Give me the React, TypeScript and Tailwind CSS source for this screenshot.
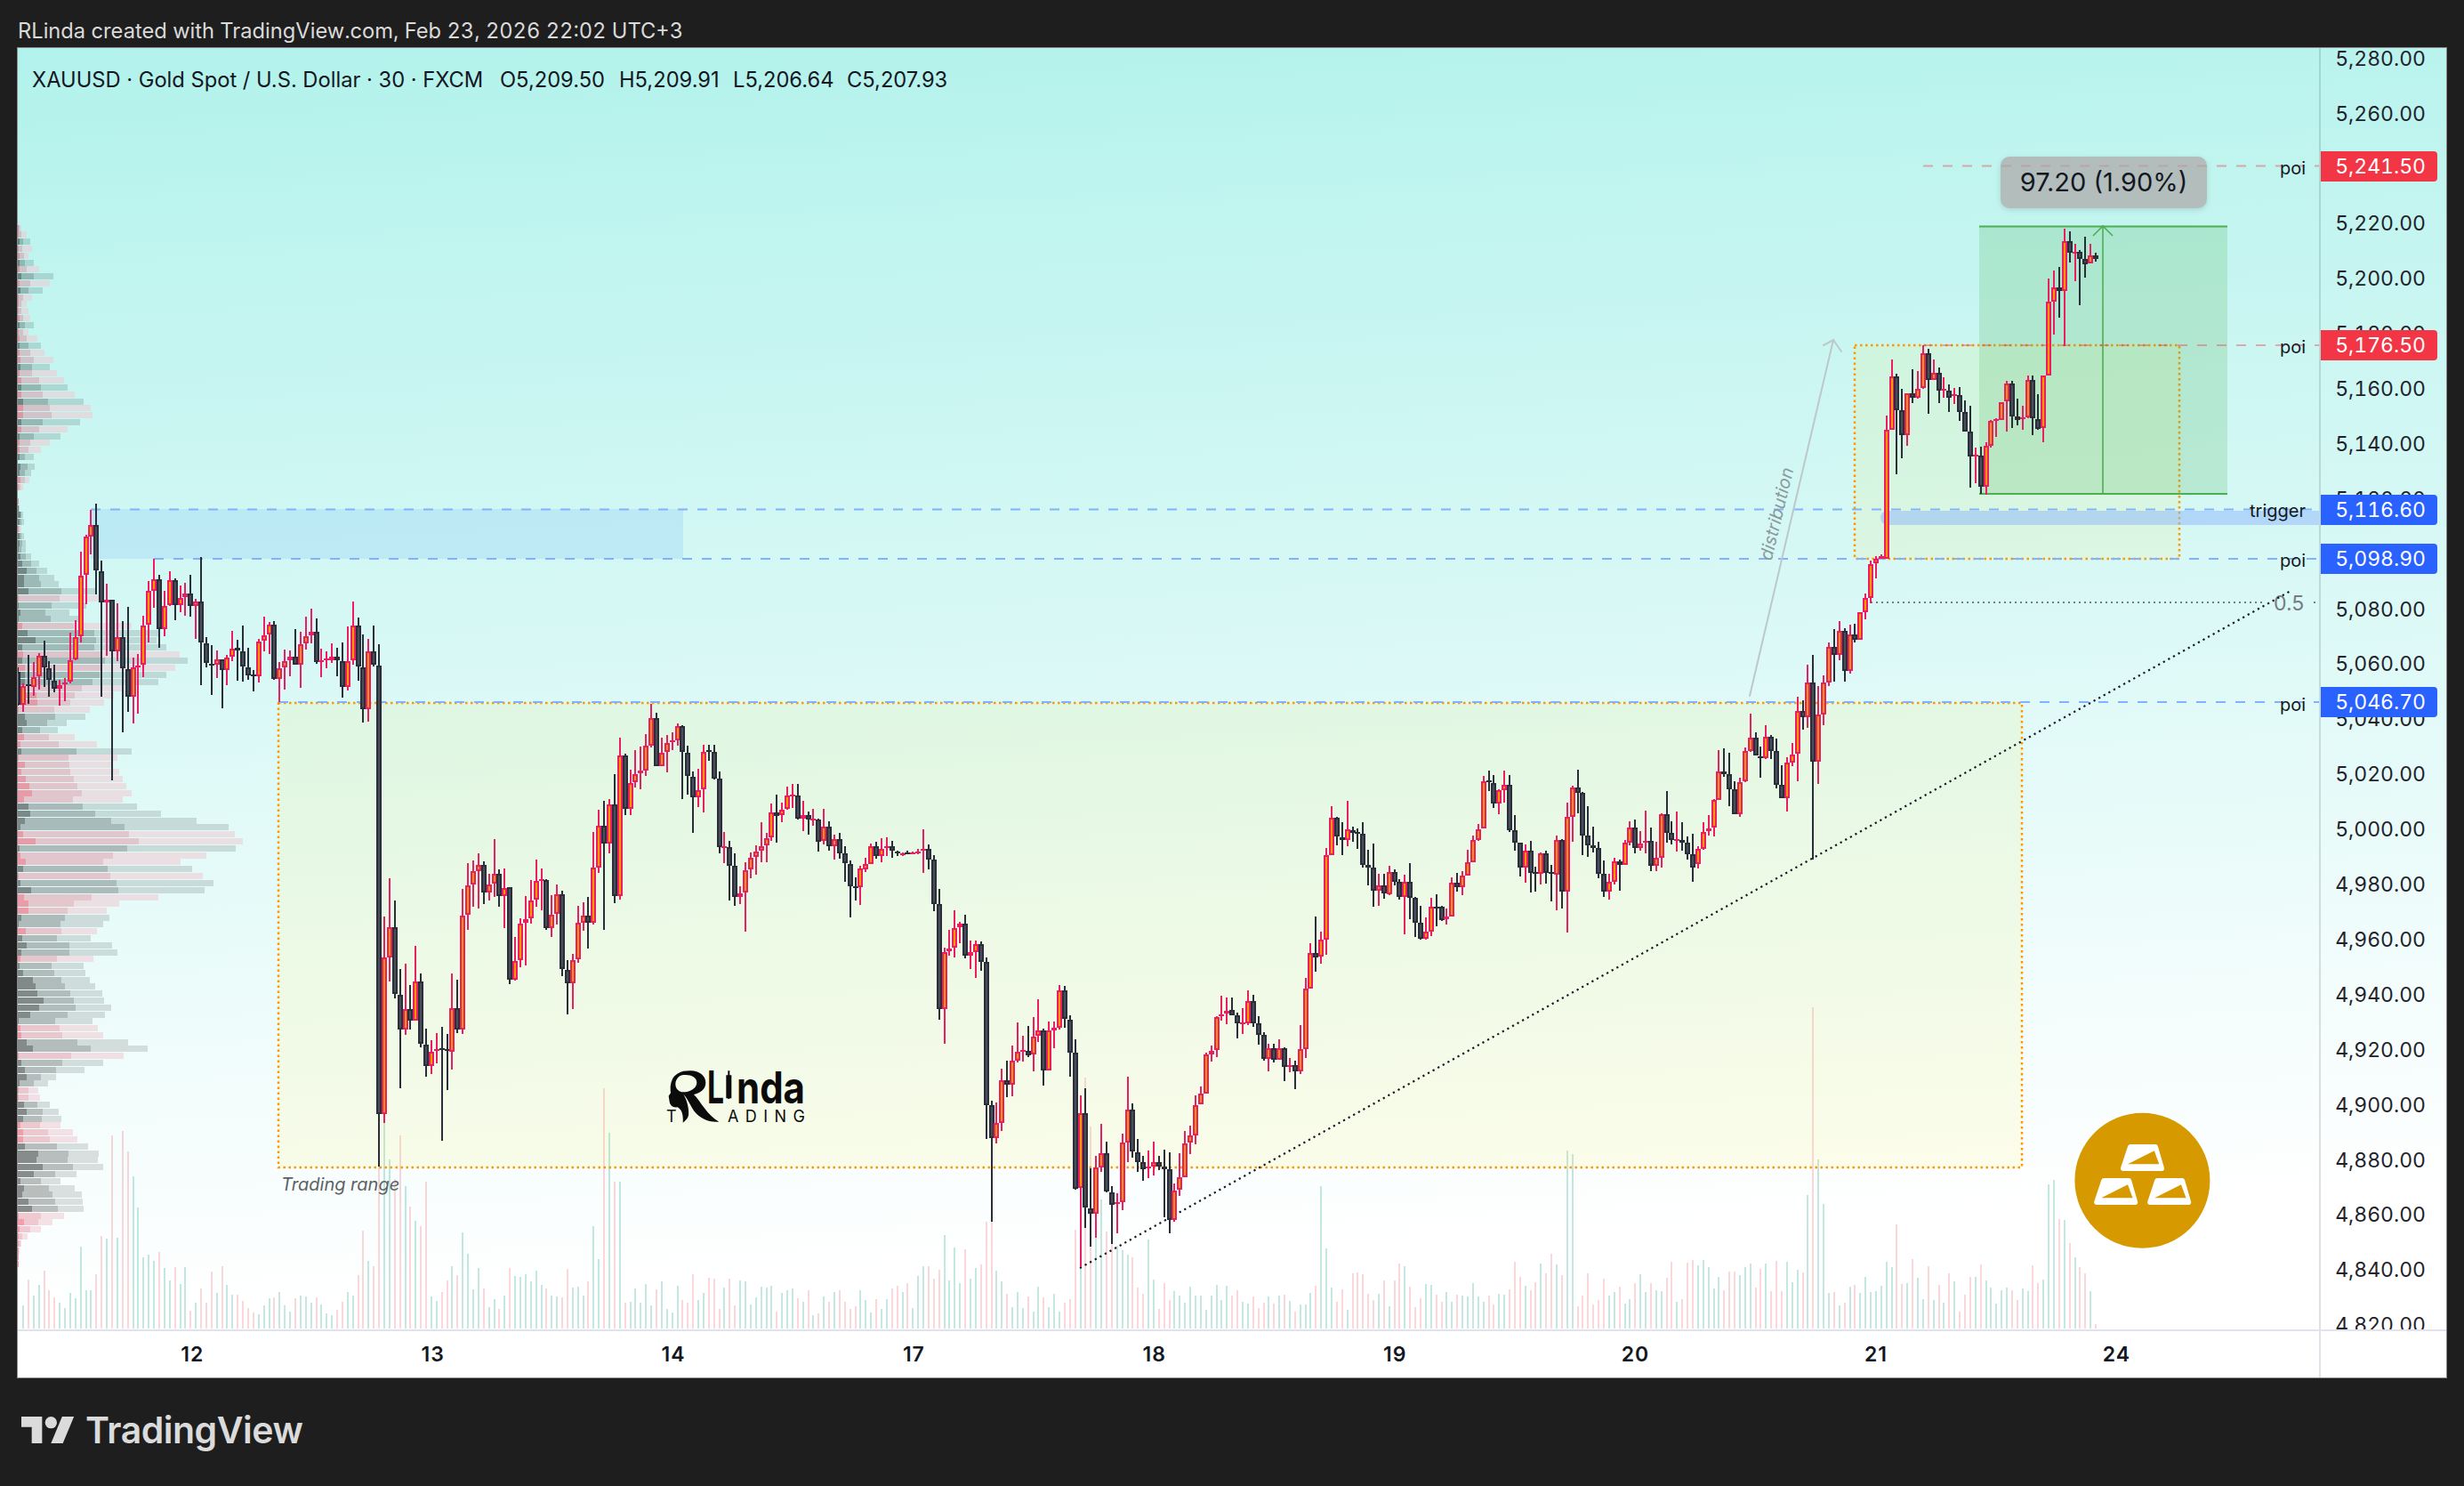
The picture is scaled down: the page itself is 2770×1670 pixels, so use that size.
// XAUUSD 30m chart snapshot. Candle rows are [up, wickTop, bodyTop, bodyBottom, wickBottom].
type Row = [number, number, number, number, number];
type Candle = { i: number; up: boolean; wt: number; bt: number; bb: number; wb: number };

const segments: { start: number; y0: number; s: number; rows: Row[] }[] = [
  {
    start: -1, y0: 520, s: 3,
    rows: [
      [0,690,705,815,820],[1,745,752,815,840],[0,648,748,752,812],[1,672,722,755,785],[1,642,650,720,765],[0,600,650,690,755],[0,670,692,733,790],[0,682,735,763,773],[1,732,750,763,818],[1,727,740,748,803],
      [1,573,665,738,745],[1,530,587,663,665],[1,300,380,585,607],[1,243,250,378,476],[1,158,209,250,308],[0,138,209,363,443],[0,330,365,472,790],[1,408,463,472,650],[0,463,463,636,1070],[1,475,587,637,668],
      [0,535,587,693,910],[0,487,695,790,840],[1,657,689,790,878],[1,645,683,688,845],[1,516,548,682,722],[1,400,433,547,605],[1,325,392,432,488],[0,378,392,562,623],[1,432,482,562,585],[1,366,395,480,482],
      [0,390,395,480,530],[1,415,456,480,503],[1,405,440,453,515],[0,378,440,484,518],[1,460,467,484,593],[0,318,467,606,750],[0,588,608,676,690],[0,615,677,682,782],[1,633,662,682,725],[0,662,662,700,828],
      [1,648,657,700,750],[1,567,627,654,668],[0,597,625,634,735],[0,549,635,688,738],[0,624,689,717,732],[0,699,714,720,770],[1,595,602,720,740],[1,519,582,600,636],[1,538,546,580,645],[0,534,546,729,732],
      [1,672,692,730,806],[1,630,668,690,765],[1,633,654,667,720],[0,561,654,681,682],[1,570,612,681,758],[1,519,584,609,630],[1,492,570,582,608],[0,525,570,672,678],[1,628,667,670,723],[1,636,660,664,693],
      [1,610,654,666,675],[0,625,654,667,720],[0,606,669,757,792],[1,552,669,757,767],[1,468,549,667,680],[0,522,549,687,735],[0,579,690,832,876],[1,594,636,832,872],[0,549,636,682,687],[0,612,684,2196,2373],
    ],
  },
  {
    start: 69, y0: 780, s: 3,
    rows: [
      [1,750,887,1417,1445],[1,621,785,887,970],[0,697,785,1012,1025],[0,927,1013,1130,1330],[1,910,1063,1130,1148],[0,981,1063,1102,1130],[1,850,970,1102,1102],[0,942,970,1180,1190],[0,1128,1181,1255,1290],[1,1167,1205,1255,1280],
      [1,1143,1198,1204,1245],[0,1122,1195,1198,1505],[0,1146,1197,1200,1335],[1,942,1058,1207,1265],[0,963,1058,1132,1142],[1,657,746,1132,1147],[1,570,645,745,795],[1,560,596,643,717],[1,537,575,596,722],[0,565,575,668,707],
      [1,606,642,668,695],[1,489,605,640,685],[0,592,605,681,716],[1,588,653,681,790],[0,650,652,963,977],[1,820,900,963,965],[1,755,773,897,920],[1,682,758,772,915],[1,626,695,755,775],[1,558,629,693,718],
      [1,588,625,628,730],[0,625,628,790,795],[1,678,744,790,820],[1,642,674,742,778],[0,662,674,928,952],[0,897,930,976,1080],[1,877,896,976,1062],[1,714,770,895,905],[1,703,748,770,797],[0,685,748,772,857],
      [1,465,585,772,778],[1,390,443,584,603],[0,360,443,505,795],[1,354,371,505,537],[0,270,371,680,705],[1,148,206,680,692],[0,202,206,388,408],[1,255,299,388,407],[1,190,269,298,315],[1,178,257,268,320],
      [1,136,173,257,275],[1,33,80,173,180],[0,63,80,243,243],[1,148,197,243,243],[1,138,165,195,263],[1,128,155,157,188],[1,100,107,155,173],[0,105,107,195,355],[0,175,197,277,338],[0,262,278,349,467],
      [1,252,323,349,380],[1,172,194,322,398],[0,172,190,192,224],[0,170,194,284,287],[0,262,284,516,536],[1,465,512,514,570],[0,495,516,580,697],[0,538,580,685,713],[1,648,671,685,708],[1,568,593,670,800],
      [1,535,551,592,620],[1,510,530,550,608],[1,433,512,528,567],[1,468,485,511,567],[1,370,398,484,495],[0,340,398,410,500],[1,367,390,408,432],[1,312,341,387,389],[1,303,338,341,385],[0,303,341,421,423],
      [1,360,408,421,461],[0,397,408,424,473],[1,388,419,422,443],[0,420,422,497,530],
    ],
  },
  {
    start: 153, y0: 860, s: 2.8,
    rows: [
      [1,137,192,238,250],[0,177,192,256,268],[1,218,231,256,296],[0,213,231,276,293],[0,256,276,309,366],[0,300,310,381,478],[0,352,380,382,425],[1,316,326,384,440],[1,291,312,327,335],[1,247,256,312,312],
      [0,241,256,285,293],[1,230,262,285,306],[1,227,254,256,285],[0,238,256,270,290],[0,270,271,278,285],[1,274,276,277,285],[0,268,275,278,280],[1,272,273,275,277],[1,264,271,275,279],[1,202,262,270,338],
      [0,250,262,298,327],[0,283,298,438,458],[0,390,438,768,800],[1,575,587,768,875],[1,518,577,585,600],[1,457,512,575,605],[1,494,497,510,560],[0,470,497,598,608],[1,552,587,598,640],[1,552,562,587,670],
      [0,555,562,620,646],[0,605,620,1070,1175],[0,1056,1070,1173,1435],[1,1062,1125,1173,1190],[1,955,990,1125,1150],[0,930,990,1005,1043],[1,882,930,1005,1042],[1,810,901,930,935],[1,851,895,898,932],[0,820,898,912,918],
      [1,792,853,910,962],[1,735,834,852,870],[0,830,834,961,1007],[1,806,835,961,961],[1,806,825,835,890],[1,692,708,825,832],[0,695,708,798,825],[0,787,800,905,980],[0,862,905,1332,1336],[1,1040,1094,1330,1579],
      [0,1015,1094,1392,1455],[0,1268,1394,1410,1515],[1,1228,1265,1410,1487],[1,1129,1220,1265,1280],[0,1183,1220,1342,1345],[0,1323,1344,1382,1505],[1,1348,1375,1376,1472],[1,1158,1186,1375,1400],[1,980,1083,1186,1248],[0,1065,1083,1215,1235],
      [0,1177,1217,1248,1280],[0,1228,1248,1270,1307],[1,1212,1262,1264,1300],[1,1185,1248,1264,1290],[0,1230,1248,1262,1275],[0,1210,1262,1270,1422],[0,1218,1270,1432,1472],[1,1316,1338,1432,1435],[1,1222,1296,1336,1355],[1,1150,1190,1295,1296],
      [1,1135,1166,1188,1224],[1,1040,1069,1166,1192],[1,1012,1032,1068,1068],[1,903,911,1032,1032],[1,882,898,911,932],[1,790,792,897,918],[1,726,784,790,803],[1,732,773,781,815],[0,731,771,788,788],[0,778,788,813,860],
      [1,765,810,812,846],[1,708,741,812,818],[0,723,741,812,823],[0,790,813,849,878],[0,840,849,925,930],[1,875,890,925,962],[0,875,890,928,934],[1,863,890,928,928],[0,888,890,950,994],[1,922,943,948,965],
      [0,930,943,963,1018],[1,818,892,963,972],[1,668,702,892,920],[1,560,590,702,702],[0,477,590,604,650],
    ],
  },
  {
    start: 248, y0: 800, s: 3,
    rows: [
      [1,742,767,825,848],[1,458,482,767,818],[1,318,358,482,482],[0,354,358,420,450],[0,372,422,432,483],[1,300,397,432,452],[0,388,398,408,437],[0,393,406,408,461],[0,373,412,515,525],[0,465,515,524,585],
      [0,445,524,604,656],[1,546,586,604,653],[0,546,586,613,630],[1,519,541,614,617],[0,530,541,574,584],[0,565,574,625,632],[1,550,574,625,749],[0,510,574,627,698],[0,625,627,710,760],[0,655,710,765,768],
      [1,693,740,765,767],[1,628,658,740,755],[0,615,657,659,722],[0,655,658,702,705],[1,663,689,698,717],[1,558,577,689,689],[0,544,577,592,605],[1,537,553,592,618],[1,465,508,553,553],[1,418,431,508,508],
      [1,378,395,431,434],[1,216,235,394,394],[0,198,232,234,267],[0,212,241,310,324],[1,262,265,310,345],[1,198,247,265,305],[0,213,247,398,404],[0,348,398,442,467],[0,440,442,526,555],[1,447,467,526,575],
      [0,435,467,543,608],[0,522,541,544,606],[1,474,476,547,582],[0,467,476,543,578],[0,516,541,544,640],[1,418,431,550,670],[0,430,431,605,662],[1,306,355,605,743],[1,250,254,355,437],[0,195,254,274,342],
      [0,270,274,416,483],[0,318,416,451,488],[0,388,449,460,475],[0,438,460,545,560],[0,502,545,607,624],[1,546,573,607,632],[1,492,503,572,581],[0,497,503,515,603],[1,432,442,515,515],[1,370,389,442,449],
      [0,363,389,460,476],[1,403,444,460,467],[1,333,434,442,476],[0,390,434,520,537],[1,438,491,520,537],[1,343,346,491,524],[0,267,346,409,440],[0,370,409,433,446],[1,336,428,430,470],[0,373,431,442,467],
      [0,420,442,479,497],[0,411,479,524,572],[1,453,461,514,527],[1,373,405,461,464],[1,348,392,403,418],[1,293,296,390,419],[1,129,200,296,296],[0,123,200,210,218],[0,138,211,262,318],[0,235,262,346,346],
      [1,222,236,346,353],[1,120,133,235,238],[1,6,86,133,136],[0,69,86,148,148],[0,117,149,157,222],[1,45,83,157,160],[0,78,83,133,158],[0,90,133,245,258],[0,180,245,290,292],[1,153,170,290,335],[1,105,143,170,182],
    ],
  },
  {
    start: 339, y0: 640, s: 3,
    rows: [
      [1,430,478,622,713],[0,441,478,497,540],[1,321,382,497,534],[0,288,382,647,978],[1,393,490,647,722],[1,358,382,490,525],[1,246,262,382,392],[0,201,262,287,378],[1,174,208,287,305],[0,198,208,341,378],
      [1,186,220,341,351],[0,183,220,238,245],[1,145,145,238,238],[1,82,97,145,167],
    ],
  },
  { start: 353, y0: 550, s: 3, rows: [[1,240,253,366,385],[1,225,235,250,300],[1,220,225,235,235]] },
  {
    start: 356, y0: 150, s: 3,
    rows: [
      [1,952,998,1435,1435],[1,762,820,998,1000],[0,810,820,932,1150],[0,862,932,1016,1095],[1,875,877,1016,1052],[0,795,877,892,910],[1,800,860,892,895],[1,715,740,858,860],[0,727,740,830,945],[1,762,808,830,830],
      [0,788,808,868,910],[1,822,860,868,890],[0,847,866,890,938],[1,858,880,885,912],[0,856,883,940,968],[0,900,940,1004,1006],[0,918,1004,1090,1193],[1,1060,1082,1085,1180],[0,1055,1085,1190,1215],[1,1040,1052,1190,1218],
      [1,967,968,1052,1058],[1,960,962,968,1022],[1,905,905,965,966],[1,835,842,903,1005],[0,835,842,955,992],[0,895,955,965,985],[1,918,957,958,998],[1,815,830,958,960],[0,815,830,960,1016],[0,880,962,995,1000],
      [1,817,817,993,1040],[1,490,568,817,817],[1,462,518,568,678],[0,450,518,532,620],[1,322,362,532,718],[0,330,362,403,435],[1,372,398,400,497],[0,393,398,422,578],[0,348,422,440,485],[1,372,410,438,438],[0,403,410,422,432],
    ],
  },
];

const candles: Candle[] = segments.flatMap((seg) =>
  seg.rows.map((r, k) => ({
    i: seg.start + k,
    up: r[0] === 1,
    wt: seg.y0 + r[1] / seg.s,
    bt: seg.y0 + r[2] / seg.s,
    bb: seg.y0 + r[3] / seg.s,
    wb: seg.y0 + r[4] / seg.s,
  })),
);

const barX = (i: number) => 26 + 5.884 * i;

// volume tops read off the left of the chart as [crop x, crop y], base at 1380
const volLeft = [
  [58,1308],[71,1225],[84,1275],[96,1243],[110,1198],[122,1260],[136,1282],[150,1300],[163,1316],[177,1267],[190,1285],[204,1123],[215,1260],[228,1260],[242,1210],[255,1090],[269,1098],[282,773],[295,1095],[309,757],[321,823],[334,900],[347,1000],[360,1155],[374,1148],[387,1168],[401,1140],[414,1190],[428,1230],[438,1187],[452,1240],[466,1187],[479,1325],[492,1300],[506,1255],[519,1300],[533,1202],[544,1268],[558,1185],[571,1243],[584,1273],[598,1273],[611,1292],[624,1316],[638,1330],[652,1336],[663,1308],[676,1285],[690,1282],[703,1266],[716,1308],[730,1328],[743,1285],[757,1275],[770,1278],[783,1300],[795,1283],[809,1305],[822,1333],[835,1338],[849,1320],[862,1295],[875,1264],[887,1275],[901,1213],[914,1073],[927,1168],[941,1184],[955,870],[968,733],[981,848],[994,910],[1006,773],[1019,933],[1032,995],[1046,1040],[1060,1058],[1073,917],[1087,1280],[1100,1292],[1111,1265],[1125,1230],[1138,1183],[1151,1213],[1165,1078],[1178,1145],[1191,1258],[1205,1190],[1218,1255],[1230,1313],[1243,1288],[1256,1318],[1270,1277],[1284,1190],[1297,1215],[1310,1218],[1323,1210],[1336,1232],[1349,1198],[1362,1243],[1375,1255],[1388,1277],[1401,1280],[1415,1282],[1428,1193],[1442,1250],[1453,1249],[1467,1277],[1481,1232],[1494,1057],[1507,1162],[1521,625],[1534,765],[1547,917],[1560,917],
];
const volRight = [820,765,705,705,663,717,741,795,750,741,750,783,744,753,666,726,714,393,378,510,513,591,639,672,693,753,864];
const volFixed: Record<number, number> = {
  176: 105, 184: 120, 185: 123, 201: 111, 202: 120, 203: 282, 204: 227, 205: 104, 206: 145, 207: 109, 208: 97, 209: 93, 210: 88, 211: 83, 212: 80, 215: 100,
  248: 160, 249: 90, 295: 200, 296: 196, 342: 361, 343: 190, 341: 150, 344: 140, 358: 117,
};
const volBumps = [[132, 0.5, 8], [178, 1.1, 7], [222, 0.3, 10], [262, 0.7, 8], [290, 1.1, 7], [318, 0.8, 8], [335, 0.7, 7], [360, 1.0, 7]];

function rand(i: number) {
  const v = Math.sin(i * 12.9898) * 43758.5453;
  return v - Math.floor(v);
}

function volumeHeight(i: number) {
  if (volFixed[i]) return volFixed[i];
  let boost = 1;
  for (const [c, a, w] of volBumps) boost += a * Math.exp(-((i - c) ** 2) / (2 * w * w));
  return (14 + rand(i) * 30) * boost;
}

const volumes = new Map<number, number>();
candles.forEach((c) => volumes.set(c.i, volumeHeight(c.i)));
volLeft.forEach(([x, top]) => volumes.set(Math.round((x / 2.24 - 26) / 5.884), (1380 - top) / 2.8));
volRight.forEach((top, k) => volumes.set(370 + k, (878 - top) / 3));
volumes.delete(-1);

// volume profile: [y, up, dark end, mid end, light end]
type Prof = [number, number, number, number, number];
const profTop: [number, number, number, number][] = [
  [1,21,22,24],[1,21,24,30],[0,22,26,34],[1,21,25,36],[1,22,27,32],[0,22,28,38],[1,22,30,44],[0,24,38,60],[1,22,34,56],[0,23,32,48],[1,21,26,36],[1,21,24,30],[1,21,24,32],[1,22,26,34],[0,22,28,38],[1,21,26,32],[1,22,30,42],
  [0,22,32,46],[1,22,34,50],[1,23,38,60],[0,23,36,56],[1,22,36,64],[1,24,44,72],[0,24,46,76],[1,24,48,84],[0,26,54,94],[1,26,56,102],[1,26,58,104],[0,24,48,90],[1,24,44,76],[0,22,38,68],[1,22,34,56],[1,22,32,46],[0,22,28,38],
];
const profMid: Prof[] = [
  [12,0,70,93,117],[35,0,66,84,105],[59,1,69,84,99],[83,1,63,69,78],[130,1,63,63,63],[153,0,64,64,66],[176,0,70,72,78],[200,0,66,72,81],[223,1,63,66,72],[246,0,66,72,81],[270,0,66,75,87],[293,0,63,72,87],[316,0,70,87,105],[340,0,75,105,132],[363,0,90,124,159],[387,0,81,132,183],[410,0,81,138,198],[434,0,96,207,320],[457,1,63,201,335],[481,0,63,174,291],[504,0,69,153,234],[527,0,63,171,263],[551,1,75,250,444],[574,0,93,318,540],[598,0,120,324,528],[621,0,75,318,561],[645,1,78,340,606],[668,0,75,354,633],[691,1,84,340,591],[714,0,84,337,561],[738,0,84,312,534],[761,1,72,276,413],[785,1,123,252,383],[808,1,126,237,351],[831,1,63,183,303],[855,0,84,186,288],[878,0,90,159,225],[902,0,75,135,195],[925,1,81,165,252],[948,1,69,198,327],[972,0,72,258,444],[995,1,63,231,396],[1019,1,84,234,378],[1042,1,72,237,402],[1065,1,87,249,414],[1089,1,99,261,426],[1113,1,108,276,444],[1136,1,81,246,414],[1159,0,96,279,462],[1182,0,102,321,543],[1206,0,84,375,663],[1229,0,69,420,771],[1253,1,78,435,792],[1276,1,120,468,819],[1299,0,66,429,795],[1323,1,69,381,696],[1346,1,87,348,609],[1370,0,78,363,648],[1393,1,63,372,684],[1416,0,69,393,720],[1440,0,105,399,690],[1464,1,81,309,534],[1487,1,96,249,402],
];
const profLow: Prof[] = [
  [65,1,72,170,269],[87,0,54,164,276],[109,0,46,152,260],[131,1,65,155,244],[153,0,56,143,228],[174,0,67,175,282],[196,0,54,175,296],[218,1,52,143,235],[240,0,49,130,211],[262,0,58,137,215],[283,0,83,155,226],[305,0,90,164,240],[327,0,94,177,258],[349,0,110,186,262],[371,0,99,190,280],[392,0,76,170,264],[414,0,46,139,233],[436,1,52,150,246],[459,1,54,157,260],[480,0,67,195,323],[501,0,83,228,372],[523,1,46,179,311],[545,0,54,157,260],[568,0,63,140,213],[589,0,67,103,141],[610,0,49,85,121],[632,1,46,72,96],[655,1,46,72,101],[677,0,60,94,125],[698,0,67,108,148],[720,0,58,105,155],[741,1,52,101,152],[764,1,58,121,184],[786,1,58,125,195],[808,0,63,143,222],[829,0,96,172,249],[851,0,92,170,246],[873,0,108,184,260],[895,0,85,139,193],[916,0,51,103,152],[938,0,60,123,188],[960,0,56,132,206],[982,0,72,139,208],[1004,0,81,146,211],[1026,1,46,103,161],[1047,1,60,96,132],[1069,1,49,76,103],[1091,1,46,56,69],[1113,1,46,52,54],[1134,1,46,46,49],[1156,1,46,46,48],[1178,1,46,46,48],
];
const profile: Prof[] = [
  ...profTop.map((r, k): Prof => [256 + 7.8 * k, r[0], r[1], r[2], r[3]]),
  ...profMid.map((r): Prof => [520 + r[0] / 3, r[1], r[2] / 3, r[3] / 3, r[4] / 3]),
  ...profLow.map((r): Prof => [1000 + r[0] / 2.8, r[1], r[2] / 2.24, r[3] / 2.24, r[4] / 2.24]),
];

const prices = ['5,280.00','5,260.00','5,240.00','5,220.00','5,200.00','5,180.00','5,160.00','5,140.00','5,120.00','5,100.00','5,080.00','5,060.00','5,040.00','5,020.00','5,000.00','4,980.00','4,960.00','4,940.00','4,920.00','4,900.00','4,880.00','4,860.00','4,840.00','4,820.00'];
const days = ['12', '13', '14', '17', '18', '19', '20', '21', '24'];

function Profile() {
  return (
    <g shapeRendering="crispEdges">
      {profile.map(([y, up, a, b, c], k) => (
        <g key={k}>
          <rect x={b} y={y - 3.5} width={Math.max(c - b, 0)} height={7} fill={up ? 'rgb(240,200,210)' : '#000'} fillOpacity={up ? 0.55 : 0.12} />
          <rect x={a} y={y - 3.5} width={Math.max(b - a, 0)} height={7} fill={up ? 'rgb(225,120,140)' : '#000'} fillOpacity={up ? 0.4 : 0.25} />
          <rect x={20} y={y - 3.5} width={Math.max(a - 20, 0)} height={7} fill={up ? 'rgb(240,40,70)' : '#000'} fillOpacity={0.45} />
        </g>
      ))}
    </g>
  );
}

function Volumes() {
  // pink candles close higher here, so their volume is the teal one
  return (
    <g shapeRendering="crispEdges">
      {candles.filter((c) => volumes.has(c.i)).map((c) => {
        const h = volumes.get(c.i) ?? 0;
        return (
          <rect key={c.i} x={Math.round(barX(c.i) - 1)} y={1493 - h} width={2} height={h} fill={c.up ? 'rgb(8,153,129)' : 'rgb(242,54,69)'} fillOpacity={c.up ? 0.24 : 0.2} />
        );
      })}
    </g>
  );
}

function Candles() {
  return (
    <g shapeRendering="crispEdges">
      {candles.map((c) => {
        const cx = barX(c.i);
        const line = c.up ? '#e91e63' : '#2a2e39';
        const inner = c.up ? '#ff9800' : '#4a4e5c';
        const h = Math.max(c.bb - c.bt, 2);
        return (
          <g key={c.i}>
            <rect x={Math.round(cx - 1)} y={c.wt} width={2} height={c.wb - c.wt} fill={line} />
            <rect x={Math.round(cx - 3)} y={c.bt} width={6} height={h} fill={line} />
            {h > 4 && <rect x={Math.round(cx - 3) + 2} y={c.bt + 2} width={2} height={h - 4} fill={inner} />}
          </g>
        );
      })}
    </g>
  );
}

function Ingot({ dx, dy }: { dx: number; dy: number }) {
  return (
    <g transform={`translate(${dx} ${dy})`}>
      <polygon points="2395,1289 2423,1289 2430,1313 2387,1313" fill="#fff" stroke="#fff" strokeWidth={6} strokeLinejoin="round" />
      <polygon points="2421.8,1293.3 2427.3,1308.3 2392,1308.3" fill="#d69a00" />
    </g>
  );
}

function Drawings() {
  return (
    <g>
      {/* zones */}
      <rect x={102} y={572} width={666} height={56} fill="#90caf9" fillOpacity={0.3} />
      <rect x={313} y={790} width={1960} height={522} fill="rgb(255,235,59)" fillOpacity={0.1} />
      <rect x={2085} y={388} width={365} height={240} fill="rgb(255,235,59)" fillOpacity={0.1} />
      <g fill="none" stroke="#ff9800" strokeWidth={2.5} strokeDasharray="2.5 3.5">
        <rect x={313} y={790} width={1960} height={522} />
        <rect x={2085} y={388} width={365} height={240} />
      </g>
      <rect x={2225} y={254} width={279} height={301} fill="#4caf50" fillOpacity={0.2} />
      <path d="M2122 574H2607V590H2122A8 8 0 0 1 2122 574Z" fill="rgb(141,182,251)" fillOpacity={0.5} />

      {/* horizontal levels */}
      <g strokeWidth={2} strokeDasharray="11 11" fill="none">
        <line x1={2162} y1={186.5} x2={2607} y2={186.5} stroke="#f23645" strokeOpacity={0.4} />
        <line x1={2162} y1={388} x2={2607} y2={388} stroke="#f23645" strokeOpacity={0.4} />
        <line x1={102} y1={572.5} x2={2607} y2={572.5} stroke="#82b1ff" />
        <line x1={173} y1={628} x2={2607} y2={628} stroke="#82b1ff" />
        <line x1={313} y1={789} x2={2607} y2={789} stroke="#82b1ff" />
      </g>

      {/* fib level */}
      <g stroke="#787b86" strokeWidth={2} strokeDasharray="2 4">
        <line x1={2103} y1={677} x2={2546} y2={677} />
        <line x1={2601} y1={677} x2={2606} y2={677} />
      </g>
      <text x={2556} y={686} fontSize={23} fill="#787b86">0.5</text>

      {/* trend line */}
      <line x1={1214} y1={1425} x2={2577} y2={663} stroke="#131722" strokeWidth={2.2} strokeDasharray="2.2 4.2" />

      {/* distribution arrow */}
      <g stroke="#bcc8cb" strokeWidth={2} fill="none" strokeLinecap="round">
        <line x1={1967} y1={782} x2={2061} y2={382} />
        <path d="M2050 388L2061 382L2070 395" />
      </g>
      <text x={2004} y={579} fontSize={20} fontStyle="italic" fill="#8d9a9d" textAnchor="middle" transform="rotate(-76.5 2004 579)">distribution</text>

      {/* long position */}
      <g stroke="#4caf50" fill="none">
        <line x1={2225} y1={254.5} x2={2504} y2={254.5} strokeWidth={2} />
        <line x1={2225} y1={555} x2={2504} y2={555} strokeWidth={2} />
        <line x1={2364} y1={254} x2={2364} y2={555} strokeWidth={1.6} />
        <path d="M2353 265L2364 254L2375 265" strokeWidth={1.6} />
      </g>

      <text x={2592} y={196} fontSize={20} fill="#131722" textAnchor="end">poi</text>
      <text x={2592} y={397} fontSize={20} fill="#131722" textAnchor="end">poi</text>
      <text x={2592} y={581} fontSize={20} fill="#131722" textAnchor="end">trigger</text>
      <text x={2592} y={637} fontSize={20} fill="#131722" textAnchor="end">poi</text>
      <text x={2592} y={799} fontSize={20} fill="#131722" textAnchor="end">poi</text>
      <text x={316} y={1338} fontSize={20} fontStyle="italic" fill="#5d6163">Trading range</text>
    </g>
  );
}

function RLindaLogo() {
  return (
    <g transform="translate(700 1150) scale(0.3333)">
      <path
        fillRule="evenodd"
        fill="#0b0b0b"
        d="M225 160C255 158 280 175 280 200C280 222 262 235 240 240C262 262 285 310 325 332C290 335 262 322 240 295C225 270 215 248 205 240C215 255 225 285 222 310C220 322 210 330 203 335C205 310 200 290 185 283C170 285 160 278 158 265L155 245L162 235C160 220 160 195 175 178C190 163 208 160 225 160ZM200 175C225 170 250 180 250 200C250 220 225 232 205 232C190 232 178 222 178 205C178 190 188 178 200 175Z"
      />
      <path d="M358 160V255M352 178H364V250H352Z" stroke="#0b0b0b" strokeWidth={6} fill="none" />
    </g>
  );
}

export default function App() {
  return (
    <div className="w-[2770px] h-[1670px] bg-[#1e1e1e] font-[Inter,sans-serif] flex flex-col overflow-hidden">
      <div className="h-[53px] pl-[20px] pt-[20px] text-[23.7px] tabular-nums leading-[30px] text-[#dadada]">
        RLinda created with TradingView.com, Feb 23, 2026 22:02 UTC+3
      </div>

      <div className="ml-[19px] w-[2732px] border border-[#8a8a8a] flex flex-col">
        <div className="relative flex h-[1440px] bg-[linear-gradient(177deg,#b2f2ec_0%,#ffffff_90%)]">
          <div className="w-[2587px] relative">
            <svg width={2587} height={1440} viewBox="20 54 2587 1440" className="block font-[Inter,sans-serif]">
              <Profile />
              <Volumes />
              <Drawings />
              <Candles />
              <g>
                <circle cx={2408.4} cy={1326.7} r={76} fill="#d69a00" />
                <Ingot dx={0} dy={0} />
                <Ingot dx={-29.8} dy={38} />
                <Ingot dx={30.2} dy={38} />
              </g>
              <RLindaLogo />
              <text x={795} y={1240} fontSize={51} fontWeight={700} fill="#0b0b0b" textLength={19} lengthAdjust="spacingAndGlyphs">L</text>
              <text x={828} y={1240} fontSize={50} fontWeight={700} fill="#0b0b0b" textLength={77} lengthAdjust="spacingAndGlyphs">nda</text>
              <text x={749} y={1261} fontSize={18} fill="#0b0b0b">T</text>
              <text x={818} y={1261} fontSize={18} fill="#0b0b0b" textLength={87}>ADING</text>
            </svg>
            <div className="absolute left-[16px] top-[21px] flex text-[23.7px] leading-[30px] text-[#131722] whitespace-nowrap">
              <span className="w-[526px]">XAUUSD · Gold Spot / U.S. Dollar · 30 · FXCM</span>
              <span className="w-[134px]">O5,209.50</span>
              <span className="w-[128px]">H5,209.91</span>
              <span className="w-[128px]">L5,206.64</span>
              <span>C5,207.93</span>
            </div>
            <div className="absolute left-[2229px] top-[122px] w-[232px] h-[58px] rounded-[10px] bg-[rgba(172,165,165,0.7)] shadow-[0_2px_6px_rgba(0,0,0,0.12)] flex items-center justify-center text-[29px] text-[#131722]">
              97.20 (1.90%)
            </div>
          </div>

          <div className="w-[143px] relative overflow-hidden border-l-2 border-black/12">
            <div className="-mt-[19px] flex flex-col">
              {prices.map((p) => (
                <div key={p} className="h-[61.9px] shrink-0 flex items-center justify-end pr-[23px] text-[23px] tabular-nums text-[#1f222b]">
                  {p}
                </div>
              ))}
            </div>
            <div className="absolute left-0 top-[116px] w-[131px] h-[34px] rounded-r-[4px] bg-[#f23645] text-white text-[23px] tabular-nums flex items-center justify-end pr-[13px]">5,241.50</div>
            <div className="absolute left-0 top-[317px] w-[131px] h-[34px] rounded-r-[4px] bg-[#f23645] text-white text-[23px] tabular-nums flex items-center justify-end pr-[13px]">5,176.50</div>
            <div className="absolute left-0 top-[502px] w-[131px] h-[34px] rounded-r-[4px] bg-[#2962ff] text-white text-[23px] tabular-nums flex items-center justify-end pr-[13px]">5,116.60</div>
            <div className="absolute left-0 top-[557px] w-[131px] h-[34px] rounded-r-[4px] bg-[#2962ff] text-white text-[23px] tabular-nums flex items-center justify-end pr-[13px]">5,098.90</div>
            <div className="absolute left-0 top-[718px] w-[131px] h-[34px] rounded-r-[4px] bg-[#2962ff] text-white text-[23px] tabular-nums flex items-center justify-end pr-[13px]">5,046.70</div>
          </div>
        </div>

        <div className="flex h-[54px] bg-white border-t-2 border-[#e0e3eb]">
          <div className="w-[2587px] flex pl-[61px] items-center">
            {days.map((d) => (
              <div key={d} className="w-[270.4px] shrink-0 text-center text-[23px] font-semibold tracking-[1px] text-[#131722]">{d}</div>
            ))}
          </div>
          <div className="w-[143px] border-l-2 border-[#e0e3eb]" />
        </div>
      </div>

      <div className="flex items-center gap-[12px] pl-[24px] pt-[36px] text-[#dbdbdb]">
        <svg width={60} height={30} viewBox="0 4 36 18" fill="currentColor">
          <path d="M14 22H7V11H0V4h14v18zM28 22h-8l7.5-18h8L28 22z" />
          <circle cx={20} cy={8} r={4} />
        </svg>
        <span className="text-[41px] leading-[44px] font-semibold tracking-[-0.5px]">TradingView</span>
      </div>
    </div>
  );
}
